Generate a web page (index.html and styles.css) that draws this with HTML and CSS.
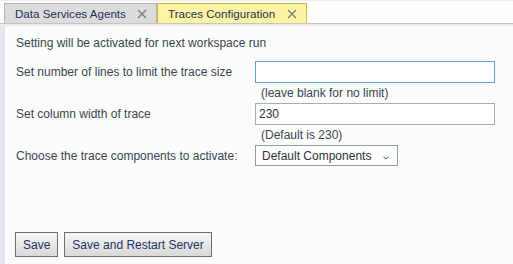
FILE: index.html
```html
<!DOCTYPE html>
<html lang="en">
<head>
    <meta charset="UTF-8">
    <title>Traces Configuration</title>
    <link rel="stylesheet" href="styles.css">
</head>
<body>

    <div class="tabbar">
        <div class="tab">
            <span>Data Services Agents</span>
            <svg class="close" width="10" height="10" viewBox="0 0 10 10"><path d="M1 1L9 9M9 1L1 9"/></svg>
        </div>
        <div class="tab active">
            <span>Traces Configuration</span>
            <svg class="close" width="10" height="10" viewBox="0 0 10 10"><path d="M1 1L9 9M9 1L1 9"/></svg>
        </div>
    </div>

    <div class="panel">
        <p class="intro">Setting will be activated for next workspace run</p>

        <div class="form">
            <label for="lines">Set number of lines to limit the trace size</label>
            <input id="lines" class="field focused" type="text" value="">
            <span class="hint">(leave blank for no limit)</span>

            <label for="width">Set column width of trace</label>
            <input id="width" class="field" type="text" value="230">
            <span class="hint">(Default is 230)</span>

            <label>Choose the trace components to activate:</label>
            <div class="select">
                <span>Default Components</span>
                <svg width="6" height="4" viewBox="0 0 6 4"><path d="M0.5 1L3 3L5.5 1"/></svg>
            </div>
        </div>

        <div class="buttons">
            <button>Save</button>
            <button>Save and Restart Server</button>
        </div>
    </div>

</body>
</html>
```

FILE: styles.css
```css
body {
    margin: 0;
    height: 264px;
    overflow: hidden;
    font-family: "Liberation Sans", Arial, sans-serif;
    font-size: 12px;
    background: #fbfdfb;
    display: flex;
    flex-direction: column;
}

.tabbar {
    display: flex;
    height: 20px;
    padding-left: 4px;
    padding-top: 2px;
    background: #fdfefd;
    border-top: 1px solid #eeeeee;
    border-bottom: 1px solid #c3c6c3;
    box-shadow: 0 2px 0 #e9ece9;
}

.tab {
    display: flex;
    align-items: center;
    justify-content: space-between;
    box-sizing: border-box;
    height: 20px;
    padding: 0 9px 0 10px;
    background: #dcdcdc;
    border: 1px solid #b5b5b5;
    border-bottom: none;
    color: #1e3158;
    font-size: 11.6px;
    width: 153px;
}

.tab.active {
    background: #fcf4a2;
    border-color: #cfbd3e;
    width: 150px;
}

.close {
    stroke: #7a7a7a;
    stroke-width: 1.3;
    fill: none;
}

.panel {
    flex: 1;
    margin-top: 2px;
    border-left: 5px solid #e4e8ec;
    padding: 10px 0 0 10px;
    color: #3a4350;
    display: flex;
    flex-direction: column;
}

.intro {
    margin: 0 0 11px 1px;
    line-height: 14px;
}

.form {
    display: grid;
    grid-template-columns: 240px 240px;
    row-gap: 3px;
    align-items: center;
}

.form label {
    grid-column: 1;
    padding-left: 1px;
}

.field {
    grid-column: 2;
    box-sizing: border-box;
    height: 22px;
    margin: 0;
    padding: 0 3px;
    border: 1px solid #a6adb3;
    background: #ffffff;
    font-family: inherit;
    font-size: 12px;
    color: #2d3440;
    outline: none;
}

.field.focused {
    border-color: #5fa2d8;
}

.hint {
    grid-column: 2;
    line-height: 14px;
    padding-left: 6px;
}

.select {
    grid-column: 2;
    box-sizing: border-box;
    width: 143px;
    height: 21px;
    display: flex;
    align-items: center;
    justify-content: space-between;
    padding: 0 8px 0 6px;
    border: 1px solid #8e9ca8;
    background: #ffffff;
    color: #2d3440;
}

.select svg {
    margin-top: 4px;
    stroke: #555555;
    fill: none;
}

.buttons {
    display: flex;
    gap: 6px;
    margin-top: 66px;
}

.buttons button {
    height: 25px;
    margin: 0;
    padding: 0 7px;
    border: 1px solid #6e6e6e;
    background: linear-gradient(#f6f6f6, #d9d9d9);
    color: #1c3262;
    font-family: inherit;
    font-size: 12px;
}
```
